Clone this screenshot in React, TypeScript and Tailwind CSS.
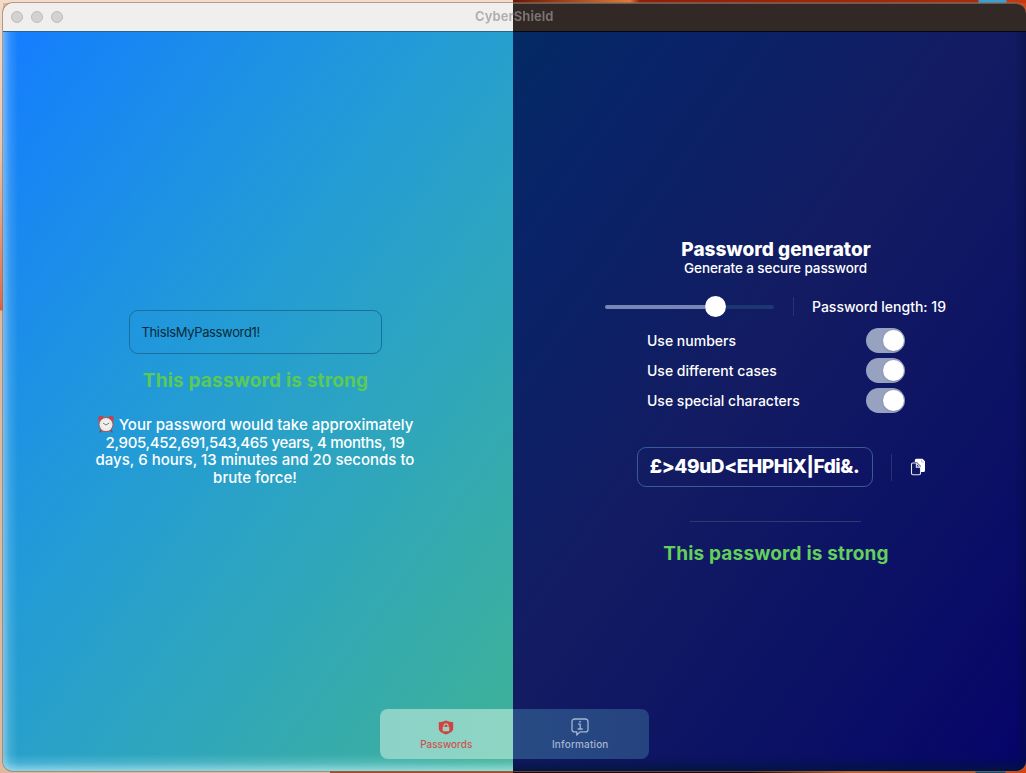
import React from "react";

const options = ["Use numbers", "Use different cases", "Use special characters"];

function AlarmClock() {
  return (
    <svg viewBox="0 0 18 18" className="inline-block h-[18px] w-[18px] align-[-3px]">
      <path d="M4.5 14.5 3 17M13.5 14.5 15 17" stroke="#9b3b3b" strokeWidth="1.4" strokeLinecap="round" />
      <circle cx="4" cy="3.6" r="2.8" fill="#c8404a" />
      <circle cx="14" cy="3.6" r="2.8" fill="#c8404a" />
      <circle cx="9" cy="9.6" r="7.5" fill="#a8595c" />
      <circle cx="9" cy="9.6" r="6.5" fill="#f3efec" />
      <path d="M6 8 9 10l3.2-2" fill="none" stroke="#5a5a5a" strokeWidth="0.8" />
      <circle cx="9" cy="9.7" r="5" fill="none" stroke="#b9b2ac" strokeWidth="0.7" strokeDasharray="0.7 1.92" />
    </svg>
  );
}

function ShieldLock() {
  return (
    <svg viewBox="0 0 16 15" className="h-[15px] w-4">
      <path d="M8 .5C6.2 1.4 4 1.9 1.800 2.100 1.100 2.200.8 2.500.8 3.200v5.300c0 3.200 3.600 4.600 7.200 6 3.600-1.400 7.200-2.800 7.200-6V3.200c0-.7-.3-1-1-1.100C12 1.900 9.800 1.400 8 .5Z" fill="#d1433f" />
      <path d="M6 7.500V5.900a2 2 0 0 1 4 0v1.600" fill="none" stroke="#9fd0c6" strokeWidth="1.100" />
      <rect x="4.700" y="6.900" width="6.600" height="4.400" rx=".7" fill="#9fd0c6" />
    </svg>
  );
}

function InfoBubble() {
  return (
    <svg viewBox="0 0 18 18" className="h-[18px] w-[18px]" fill="none" stroke="#a3b5d2" strokeWidth="1.300" strokeLinecap="round" strokeLinejoin="round">
      <path d="M3.500 1h11A2.500 2.500 0 0 1 17 3.500v7.900a2.500 2.500 0 0 1-2.500 2.500H9L5.800 17v-3.100H3.500A2.500 2.500 0 0 1 1 11.400V3.500A2.500 2.500 0 0 1 3.500 1Z" />
      <path d="M7.400 6.100H9.200v4.800M7.200 11h4" />
      <circle cx="8.900" cy="3.800" r=".5" fill="#a3b5d2" strokeWidth=".7" />
    </svg>
  );
}

function CopyIcon() {
  return (
    <svg viewBox="0 0 16 18" className="h-[18px] w-4">
      <path d="M6.300.8h6.200L15 3.300v9.200a1.500 1.500 0 0 1-1.500 1.500H11V8.200L6.800 4H4.800V2.300A1.500 1.500 0 0 1 6.300.8Z" fill="#fff" />
      <path d="M11.600 1.700v2.300h2.300" fill="none" stroke="#8a90b6" strokeWidth=".5" />
      <path d="M2.700 5h3.600l4.200 4.200v6.100a1.400 1.400 0 0 1-1.400 1.400H2.900a1.400 1.400 0 0 1-1.400-1.400V6.300A1.300 1.300 0 0 1 2.700 5Z" fill="#10175f" stroke="#e6e8f5" strokeWidth="1.100" />
      <path d="M6.400 5.200v3.900h3.900" fill="none" stroke="#e6e8f5" strokeWidth="1.100" />
    </svg>
  );
}

function Toggle() {
  return (
    <span className="flex h-[25px] w-[39px] items-center justify-end rounded-full bg-[#97a2c1] pr-px">
      <span className="h-[21px] w-[21px] rounded-full bg-white shadow" />
    </span>
  );
}

export default function App() {
  return (
    <div className="relative h-[773px] w-[1026px] overflow-hidden bg-[linear-gradient(90deg,#ddb9a0_0_330px,#a34a20_330px_513px,#2a0703_513px_750px,#c2622a_850px_975px,#244a5c_976px_1005px,#d84410_1006px)] font-['Inter',sans-serif]">
      <div className="absolute inset-x-0 top-0 h-[3px] bg-[linear-gradient(90deg,#f3dcca_0_513px,#6b1503_513px,#e07b35_630px,#8f1f06_640px,#a82c0c_978px,#3ba0cf_979px_1006px,#c8380e_1007px)]" />
      <div className="absolute left-0 top-0 h-[770px] w-[3px] bg-[linear-gradient(180deg,#f3dcca_0,#e8c5ad_150px,#e0704c_300px,#d95f3f_310px,#ddb9a0_311px)]" />
      <div className="relative ml-[3px] mt-[3px] flex h-[768px] w-[1023px] flex-col overflow-hidden rounded-[10px] ring-1 ring-[#8b6c5d]/60">
        <header className="relative grid h-[28px] shrink-0 grid-cols-[510px_513px]">
          <div className="flex items-center gap-2 bg-[#f0efed] pl-2">
            <i className="h-3 w-3 rounded-full border border-[#bdbcb9] bg-[#d3d2cf]" />
            <i className="h-3 w-3 rounded-full border border-[#bdbcb9] bg-[#d3d2cf]" />
            <i className="h-3 w-3 rounded-full border border-[#bdbcb9] bg-[#d3d2cf]" />
          </div>
          <div className="rounded-tr-[10px] border-t border-[#665c59] bg-[#322825]" />
          <div className="absolute left-[472px] top-[4px] whitespace-nowrap bg-[linear-gradient(90deg,#b1afae_0_38px,#7b7371_38px)] bg-clip-text text-[13px] font-bold leading-[19px] text-transparent">
            CyberShield
          </div>
        </header>
        <main className="grid grow grid-cols-[510px_513px]">
          <section className="relative flex flex-col items-center border-t border-[#23678c] bg-[linear-gradient(125.9deg,#147dff_0%,#2199da_25%,#2ca4c2_40%,#3fb296_67%,#54cc62_100%)] bg-[length:1023px_740px] pr-[5px] pt-[278px]">
            <div className="pointer-events-none absolute inset-y-0 left-0 w-[15px] bg-[linear-gradient(90deg,rgba(200,235,255,.5),rgba(200,235,255,.16)_45%,rgba(200,235,255,0))]" />
            <div className="pointer-events-none absolute inset-x-0 bottom-0 h-[17px] bg-[linear-gradient(0deg,rgba(200,245,255,.6),rgba(200,240,255,.18)_50%,rgba(200,240,255,0))]" />
            <div className="mr-[1px] flex h-[44px] w-[253px] items-center rounded-[9px] border border-[#1a6f9c] px-3 pt-px text-[13px] tracking-[-0.360px] text-[#0b2a3c]">
              ThisIsMyPassword1!
            </div>
            <h2 className="mt-[15px] whitespace-nowrap text-[19px] font-bold leading-[24px] tracking-[0.180px] text-[#5bca55]">This password is strong</h2>
            <p className="mr-px mt-[22px] whitespace-nowrap text-center text-[15px] font-medium leading-[17.700px] text-white">
              <AlarmClock /> Your password would take approximately<br />
              <span className="tracking-[-0.350px]">2,905,452,691,543,465 years, 4 months, 19</span><br />
              days, 6 hours, 13 minutes and 20 seconds to<br />
              brute force!
            </p>
          </section>
          <section className="relative flex flex-col items-center border-t border-[#05060f] bg-[linear-gradient(125.9deg,#032a62_32%,#082468_42%,#131b62_64%,#0b1065_84%,#06036a_100%)] bg-[length:1023px_740px] bg-[position:-510px_0] pl-[13px] pt-[206px] text-white">
            <div className="pointer-events-none absolute inset-y-0 right-0 w-[12px] bg-[linear-gradient(270deg,rgba(0,10,50,.35),rgba(0,10,50,0))]" />
            <div className="pointer-events-none absolute inset-x-0 bottom-0 h-[17px] bg-[linear-gradient(0deg,rgba(0,22,55,.8),rgba(0,20,60,.25)_50%,rgba(0,20,60,0))]" />
            <h1 className="whitespace-nowrap text-[19px] font-extrabold leading-[24px]">Password generator</h1>
            <p className="-mt-px mr-px whitespace-nowrap text-[13.500px] font-medium leading-[14px] tracking-[-0.080px]">Generate a secure password</p>
            <div className="mt-[20px] flex h-[22px] w-[342px] items-center">
              <div className="flex w-[169px] items-center">
                <span className="mt-px h-[4px] w-[100px] rounded-l-full bg-[#7885b7]" />
                <span className="h-[21px] w-[21px] rounded-full bg-white" />
                <span className="mt-px h-[4px] grow rounded-r-full bg-[#1d3772]" />
              </div>
              <span className="ml-[19px] h-[19px] w-px bg-[#2b3272]" />
              <span className="ml-[18px] whitespace-nowrap text-[14px] font-medium">Password length: 19</span>
            </div>
            <div className="mt-[11px] flex w-[258px] flex-col gap-[5px]">
              {options.map((label) => (
                <div key={label} className="flex h-[25px] items-center justify-between text-[14px] font-medium">
                  <span>{label}</span>
                  <Toggle />
                </div>
              ))}
            </div>
            <div className="ml-[10px] mt-[34px] flex w-[289px] items-center">
              <div className="flex h-[40px] w-[236px] shrink-0 items-center justify-center whitespace-nowrap rounded-[9px] border border-[#3a5a94] text-[19px] font-extrabold tracking-[-0.420px]">
                {"£>49uD<EHPHiX|Fdi&."}
              </div>
              <span className="ml-[18px] h-[27px] w-px bg-[#2b3272]" />
              <span className="ml-[18px]"><CopyIcon /></span>
            </div>
            <div className="mr-[2px] mt-[34px] h-px w-[171px] bg-[#2d3b70]" />
            <h2 className="mt-[20px] whitespace-nowrap text-[19px] font-bold leading-[24px] tracking-[0.180px] text-[#62d05b]">This password is strong</h2>
          </section>
        </main>
        <nav className="absolute bottom-[12px] left-[377px] grid h-[50px] w-[269px] grid-cols-2 rounded-[8px] bg-[linear-gradient(90deg,#8cd2c8_0,#8fd5c3_133px,#284b84_133px,#25437f_100%)] text-[10px] font-medium">
          <div className="flex flex-col items-center pr-[2px] pt-[11px] text-[#cc5450]">
            <ShieldLock />
            <span className="mt-[3px] leading-[12px]">Passwords</span>
          </div>
          <div className="flex flex-col items-center pr-[3px] pt-[9px] text-[#a3b5d2]">
            <InfoBubble />
            <span className="mt-[2px] leading-[12px] tracking-[0.150px]">Information</span>
          </div>
        </nav>
      </div>
    </div>
  );
}
